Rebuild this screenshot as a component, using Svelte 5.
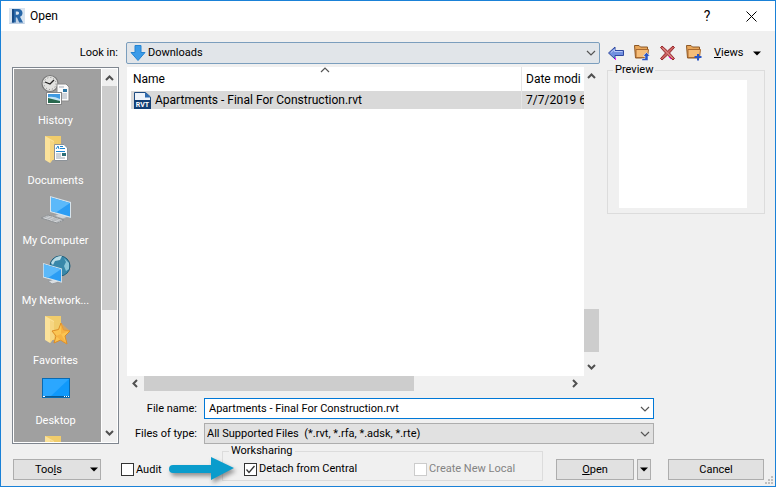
<script>
  const places = [
    { id: 'history', name: 'History' },
    { id: 'documents', name: 'Documents' },
    { id: 'computer', name: 'My Computer' },
    { id: 'network', name: 'My Network...' },
    { id: 'favorites', name: 'Favorites' },
    { id: 'desktop', name: 'Desktop' },
    { id: 'folder', name: '' },
  ];

  let fileName = 'Apartments - Final For Construction.rvt';
  let audit = false;
  let detach = true;
</script>

<!-- small arrows for scrollbars and drop-downs -->
{#snippet chevron(dir)}
  <svg class="chevron {dir}" width="9" height="9" viewBox="0 0 9 9"><path d="M1 6L4.5 2.5L8 6" /></svg>
{/snippet}

{#snippet thin()}
  <svg class="thin" width="10" height="6" viewBox="0 0 10 6"><path d="M1 1L5 5L9 1" /></svg>
{/snippet}

{#snippet triangle()}
  <svg width="8" height="5" viewBox="0 0 8 5"><path d="M0 0.5H8L4 4.5Z" fill="#000" /></svg>
{/snippet}

{#snippet folder()}
  <path d="M5 2H21V26H5Z" fill="#f0cc6c" />
  <path d="M5 2L14 7V24L10 29L5 26Z" fill="#fbe29a" />
  <path d="M10 6L14 8V24L10 29Z" fill="#f6d682" />
{/snippet}

{#snippet screen()}
  <path d="M0 0L21 6V22L0 16Z" fill="#d7e4ec" />
  <path d="M1 1.5L20 7V20.5L1 15Z" fill="#2b9df4" />
  <path d="M1 1.5L20 7L6 16.5L1 15Z" fill="#5bb9fa" />
{/snippet}

<div class="dialog">
  <header>
    <svg width="16" height="16" viewBox="0 0 16 16">
      <rect width="16" height="16" fill="#d8e4f0" />
      <path d="M0 16L7 9L16 16Z" fill="#bfd0e4" />
      <path d="M3 1H9.5C12 1 13.5 2.8 13.5 5C13.5 7 12.5 8.2 11 8.8L14 14.5H10.2L8 9.5H6.8V14.5H3Z" fill="#2867a8" />
      <path d="M6.8 3.6V6.8H8.5C10.5 6.8 10.5 3.6 8.5 3.6Z" fill="#d8e4f0" />
      <path d="M3 1H5V14.5H3Z" fill="#174b86" />
    </svg>
    <h1>Open</h1>
    <button class="plain help" aria-label="Help">?</button>
    <button class="plain close" aria-label="Close">
      <svg width="11" height="11" viewBox="0 0 11 11"><path d="M0.5 0.5L10.5 10.5M10.5 0.5L0.5 10.5" stroke="#000" fill="none" /></svg>
    </button>
  </header>

  <div class="lookin">
    <label for="look">Look in:</label>
    <div class="combo look">
      <svg width="16" height="16" viewBox="0 0 16 16"><path d="M5 0.5H11V7.5H15L8 15.5L1 7.5H5Z" fill="#3b9be8" stroke="#2484d2" /></svg>
      <select id="look"><option>Downloads</option></select>
      {@render thin()}
    </div>
    <div class="toolbar">
      <button class="plain" aria-label="Back">
        <svg width="18" height="18" viewBox="0 0 18 18">
          <path d="M1.5 9L8 3V6.5H16.5V11.5H8V15Z" fill="#7290e0" stroke="#2f489e" />
          <path d="M4 8.5L7.5 5.5V7.5H15.5" fill="none" stroke="#b6c7f6" />
          <path d="M8 14H9V16H8Z" fill="#f0f" />
        </svg>
      </button>
      <button class="plain" aria-label="Up one level">
        <svg width="18" height="18" viewBox="0 0 18 18">
          <path d="M1.5 1.5H6L7.5 3H14.5V14H2.5Z" fill="#e8a65a" stroke="#8c5826" />
          <path d="M3 5.5H15.5L14.5 13.5H3Z" fill="#f6bd78" stroke="#a9692f" />
          <path d="M10 12L13.5 8.5L17 12H15V16.5H9V14.5H12V12Z" fill="#2b56c4" stroke="#f0f0f4" stroke-width="0.5" />
        </svg>
      </button>
      <button class="plain" aria-label="Delete">
        <svg width="18" height="18" viewBox="0 0 18 18">
          <path d="M3 2L8.5 7L14 2L15.5 3.5L10.5 9L15.5 14.5L14 16L8.5 11L3 16L1.5 14.5L6.5 9L1.5 3.5Z" fill="#c9605e" stroke="#97282c" />
          <path d="M3.5 4L13.5 14" stroke="#e69a98" />
          <path d="M10 13L12 15" stroke="#f0f" />
        </svg>
      </button>
      <button class="plain" aria-label="New folder">
        <svg width="18" height="18" viewBox="0 0 18 18">
          <path d="M1.5 1.5H6L7.5 3H14.5V14H2.5Z" fill="#e8a65a" stroke="#8c5826" />
          <path d="M3 5.5H15.5L14.5 13.5H3Z" fill="#f6bd78" stroke="#a9692f" />
          <path d="M12 10H14V12H16.5V14H14V16.5H12V14H9.5V12H12Z" fill="#2b56c4" />
        </svg>
      </button>
      <button class="plain views"><span><u>V</u>iews</span>{@render triangle()}</button>
    </div>
  </div>

  <main>
    <nav>
      <ul>
        {#each places as place (place.id)}
          <li>
            <svg width="32" height="32" viewBox="0 0 32 32">
              {#if place.id === 'history'}
                <circle cx="10" cy="9.5" r="8" fill="#e2e2e0" stroke="#777" stroke-width="1.2" />
                <circle cx="10" cy="9.5" r="6" fill="none" stroke="#888" stroke-dasharray="1 2.1" />
                <path d="M5 8L10 10L14 6" fill="none" stroke="#222" stroke-width="1.3" />
                <path d="M17 10H26L29 13V27H17Z" fill="#fafafa" stroke="#8c8c8c" />
                <path d="M19 13H24M19 20H27M19 22H27M19 24H27" stroke="#a3adb8" />
                <rect x="23" y="15" width="4" height="3" fill="#2c77a5" />
                <rect x="6.5" y="18.5" width="15" height="12" fill="#fff" stroke="#888" />
                <rect x="8" y="20" width="12" height="9" fill="#3f9ae2" />
                <path d="M8 23Q14 22 20 25V27H8Z" fill="#c2e4f4" />
                <path d="M8 24L12 25L20 27V29H8Z" fill="#28684e" />
              {:else if place.id === 'documents'}
                {@render folder()}
                <path d="M14.5 10.5H24L27.5 14V26.5H14.5Z" fill="#fff" stroke="#8c9298" />
                <path d="M16 15L18 12L19 15M20 12.5H23M20 14.5H25M16 17.5H25" stroke="#1d86d0" fill="none" />
                <path d="M16 20H21M16 22H21M16 24H25" stroke="#9aa6b0" />
                <rect x="22" y="19" width="4" height="3" fill="#2b6f78" />
              {:else if place.id === 'computer'}
                <path d="M14 22L20 19L30 22L23 25Z" fill="#cfd3d6" stroke="#a4a8ac" />
                <path d="M1 24L8 21L24 26L17 29Z" fill="#dadcde" stroke="#8d9194" />
                <path d="M4 23L20 28M6 22L22 27M7 26L13 22M12 27L18 24" stroke="#b2b6ba" />
                <g transform="translate(10 2)">{@render screen()}</g>
              {:else if place.id === 'network'}
                <circle cx="20" cy="12" r="10" fill="#3887a9" stroke="#1f607e" />
                <path d="M11 9C14 3 18 2 22 2L20 6L15 7L13 11Z" fill="#b9dce6" />
                <path d="M24 4L29 9V15L26 17L24 12L26 8Z" fill="#8cc6d8" />
                <path d="M8 27L15 25L19 28L12 30Z" fill="#dadde0" stroke="#969a9e" />
                <g transform="translate(3 9) scale(0.9)">{@render screen()}</g>
              {:else if place.id === 'favorites'}
                {@render folder()}
                <path d="M21 9L23.5 16L30 17L25 22L27 30L20.5 26L14 29L16 22L12 17L18.5 15.5Z" fill="#fbc552" stroke="#dc8c25" />
                <path d="M21 9L21 20L27 30L20.5 26L16 22L21 20L30 17" fill="#f3a63a" opacity="0.6" />
              {:else if place.id === 'desktop'}
                <rect x="2.5" y="4.5" width="27" height="19" fill="#1099fb" stroke="#086ab2" />
                <path d="M3 22H11L29 5H3Z" fill="#2ba7ff" />
                <path d="M3 22.5H29" stroke="#0b5990" />
                <path d="M3 22.5H5M24 22.5H25M26 22.5H27M28 22.5H29" stroke="#fff" />
              {:else}
                {@render folder()}
              {/if}
            </svg>
            <span>{place.name}</span>
          </li>
        {/each}
      </ul>
      <div class="vbar">
        {@render chevron('up')}
        <div class="track"><div class="thumb first"></div></div>
        {@render chevron('down')}
      </div>
    </nav>

    <section>
      <div class="top">
        <div class="files">
          <div class="sheet">
            <table>
              <thead>
                <tr>
                  <th class="name">Name <svg class="thin sort" width="10" height="6" viewBox="0 0 10 6"><path d="M1 5L5 1L9 5" /></svg></th>
                  <th class="date">Date modi</th>
                </tr>
              </thead>
              <tbody>
                <tr>
                  <td class="name">
                    <div class="file">
                      <svg width="17" height="17" viewBox="0 0 17 17">
                        <path d="M0.5 0.5H11.5L16.5 5V16.5H0.5Z" fill="#eef3fa" stroke="#1c4a80" />
                        <path d="M0 8H17V17H0Z" fill="#133f74" />
                        <path d="M11 0L17 5.5H11Z" fill="#2e6bb0" />
                        <text x="8.5" y="15" text-anchor="middle">RVT</text>
                      </svg>
                      Apartments - Final For Construction.rvt
                    </div>
                  </td>
                  <td class="date">7/7/2019 6</td>
                </tr>
              </tbody>
            </table>
          </div>
          <div class="vbar">
            {@render chevron('up')}
            <div class="track end"><div class="thumb last"></div></div>
            {@render chevron('down')}
          </div>
          <div class="hbar">
            {@render chevron('left')}
            <div class="track"><div class="thumb"></div></div>
            {@render chevron('right')}
          </div>
        </div>
        <fieldset class="preview">
          <legend>Preview</legend>
          <div></div>
        </fieldset>
      </div>

      <div class="field">
        <label for="file">File name:</label>
        <div class="combo text">
          <input id="file" type="text" bind:value={fileName} />
          {@render thin()}
        </div>
      </div>
      <div class="field">
        <label for="type">Files of type:</label>
        <div class="combo">
          <select id="type"><option>All Supported Files&nbsp; (*.rvt, *.rfa, *.adsk, *.rte)</option></select>
          {@render thin()}
        </div>
      </div>
    </section>
  </main>

  <footer>
    <button class="push tools"><span>Too<u>l</u>s</span>{@render triangle()}</button>
    <label class="check audit"><input type="checkbox" bind:checked={audit} />Audit</label>
    <fieldset class="sharing">
      <legend>Worksharing</legend>
      <div class="options">
        <label class="check"><input type="checkbox" bind:checked={detach} />Detach from Central</label>
        <label class="check off"><input type="checkbox" disabled />Create New Local</label>
      </div>
      <svg class="pointer" width="70" height="30" viewBox="0 0 70 30">
        <path d="M5 11H43V3L66 14L43 26V19H5A4 4 0 0 1 5 11Z" fill="#0a9ccc" />
      </svg>
    </fieldset>
    <button class="push open"><span><u>O</u>pen</span></button>
    <button class="push more" aria-label="Open options">{@render triangle()}</button>
    <button class="push cancel">Cancel</button>
    <svg class="grip" width="9" height="9" viewBox="0 0 9 9">
      <path d="M6 0h2v2h-2zM3 3h2v2h-2zM6 3h2v2h-2zM0 6h2v2h-2zM3 6h2v2h-2zM6 6h2v2h-2z" fill="#bfbfbf" />
    </svg>
  </footer>
</div>

<style>
  :global(body) {
    margin: 0;
  }

  .dialog {
    display: flex;
    flex-direction: column;
    box-sizing: border-box;
    height: 100vh;
    border: 1px solid #1a81d7;
    background: #f0f0f0;
    color: #000;
    font: 11px/16px Roboto, "Noto Sans", sans-serif;
  }

  button, input, select {
    font: inherit;
    color: inherit;
    box-sizing: border-box;
    margin: 0;
  }

  fieldset {
    box-sizing: border-box;
    margin: 0;
    padding: 0;
    border: 1px solid #dcdcdc;
    min-width: 0;
  }

  .plain {
    display: flex;
    align-items: center;
    justify-content: center;
    border: 0;
    padding: 0;
    background: none;
  }

  /* title bar */
  header {
    display: flex;
    align-items: center;
    height: 30px;
    padding: 0 8px;
    background: #fff;
    font-size: 12px;
  }

  h1 {
    flex: 1;
    margin: 0 0 0 5px;
    font-size: 12px;
    font-weight: normal;
  }

  .help {
    width: 30px;
    font-size: 14px;
  }

  .close {
    width: 31px;
    margin-left: 14px;
  }

  /* drop-downs */
  .combo {
    display: flex;
    align-items: center;
    flex: 1;
    box-sizing: border-box;
    min-width: 0;
    height: 21px;
    padding-right: 3px;
    border: 1px solid #adadad;
    background: #e1e1e1;
  }

  .combo select,
  .combo input {
    flex: 1;
    min-width: 0;
    height: 100%;
    padding: 0 2px;
    border: 0;
    outline: 0;
    appearance: none;
    background: none;
  }

  .combo.text {
    border-color: #0078d7;
    background: #fff;
  }

  .combo.text input {
    padding: 0 4px;
  }

  .combo.look {
    height: 22px;
    padding-left: 3px;
    border-color: #7b9ebd;
    border-radius: 2px;
    background: #e1e5e9;
  }

  .thin path {
    fill: none;
    stroke: #555;
    stroke-width: 1.2;
  }

  .lookin {
    display: flex;
    align-items: center;
    gap: 7px;
    margin-top: 11px;
    padding: 0 11px;
  }

  .lookin label {
    box-sizing: border-box;
    width: 107px;
    padding-right: 1px;
    text-align: right;
  }

  .toolbar {
    display: flex;
    align-items: center;
    gap: 8px;
    width: 157px;
  }

  .views {
    flex: 1;
    justify-content: space-between;
    padding: 0 3px;
  }

  main {
    display: flex;
    flex: 1;
    gap: 8px;
    min-height: 0;
    padding: 3px 10px 0 11px;
  }

  /* places on the left */
  nav {
    display: flex;
    box-sizing: border-box;
    width: 107px;
    border: 1px solid #7f868f;
    outline: 1px solid #fff;
    outline-offset: -2px;
    padding: 1px;
  }

  nav ul {
    flex: 1;
    min-width: 0;
    margin: 0;
    padding: 0 4px 0 0;
    overflow: hidden;
    border-right: 1px solid #fff;
    background: #a0a0a0;
    color: #fff;
    list-style: none;
  }

  li {
    display: flex;
    flex-direction: column;
    align-items: center;
    gap: 7px;
    height: 55px;
    padding-top: 5px;
  }

  /* scrollbars */
  .vbar {
    display: flex;
    flex-direction: column;
    align-items: center;
    gap: 3px;
    width: 15px;
    padding: 5px 0;
    box-sizing: border-box;
  }

  .track {
    display: flex;
    flex: 1;
    align-self: stretch;
  }

  .end {
    align-items: flex-end;
  }

  .thumb {
    background: #cdcdcd;
  }

  .vbar .thumb {
    width: 100%;
  }

  .first {
    height: 66%;
  }

  .last {
    height: 43px;
    margin-bottom: 7px;
  }

  .hbar {
    display: flex;
    grid-column: 1 / 3;
    align-items: center;
    gap: 4px;
    padding: 0 20px 0 4px;
  }

  .hbar .thumb {
    width: 64%;
  }

  .chevron {
    flex: none;
  }

  .chevron path {
    fill: none;
    stroke: #505050;
    stroke-width: 2;
  }

  .down {
    transform: rotate(180deg);
  }

  .left {
    transform: rotate(-90deg);
  }

  .right {
    transform: rotate(90deg);
  }

  section {
    display: flex;
    flex: 1;
    flex-direction: column;
    min-width: 0;
  }

  .top {
    display: flex;
    flex: 1;
    gap: 8px;
    min-height: 0;
    margin-bottom: 7px;
  }

  .files {
    display: grid;
    flex: 1;
    grid-template: 1fr 15px / 1fr 15px;
    min-width: 0;
  }

  .sheet {
    overflow: hidden;
    padding-left: 4px;
    background: #fff;
  }

  table {
    width: 100%;
    border-collapse: collapse;
    table-layout: fixed;
    font-size: 12px;
    white-space: nowrap;
  }

  th {
    position: relative;
    height: 24px;
    padding: 0 0 0 2px;
    font-weight: normal;
    text-align: left;
  }

  td {
    height: 18px;
    padding: 0;
    background: #d9d9d9;
  }

  .date {
    width: 58px;
    padding-left: 4px;
    border-left: 1px solid #e5e5e5;
  }

  .sort {
    position: absolute;
    top: 0;
    left: 50%;
    margin-left: -6px;
  }

  .file {
    display: flex;
    align-items: center;
    gap: 4px;
    padding-left: 3px;
  }

  .file text {
    fill: #fff;
    font: bold 7px Roboto, sans-serif;
  }

  .preview {
    width: 158px;
    height: 150px;
    margin-top: -3px;
    padding: 4px 17px 0 11px;
  }

  legend {
    margin-left: 6px;
    padding: 0 2px;
    line-height: 12px;
  }

  .preview legend {
    margin-left: -6px;
  }

  .preview div {
    height: 128px;
    background: #fff;
  }

  .field {
    display: flex;
    align-items: center;
    gap: 7px;
    margin-bottom: 4px;
    padding-right: 111px;
  }

  .field:last-child {
    margin-bottom: 0;
  }

  .field label {
    width: 70px;
    text-align: right;
  }

  /* bottom row */
  footer {
    position: relative;
    display: flex;
    align-items: flex-end;
    padding: 1px 11px 5px 12px;
  }

  .push {
    display: flex;
    align-items: center;
    justify-content: center;
    height: 21px;
    margin-bottom: 1px;
    padding: 0;
    border: 1px solid #adadad;
    background: #e1e1e1;
  }

  .tools {
    justify-content: space-between;
    width: 88px;
    padding: 0 2px 0 21px;
  }

  .check {
    display: flex;
    align-items: center;
    gap: 2px;
    white-space: nowrap;
  }

  .check input {
    width: 13px;
    height: 13px;
    appearance: none;
    border: 1px solid #333;
    background: #fff;
  }

  .check input:checked {
    background: #fff url("data:image/svg+xml,%3Csvg xmlns='http://www.w3.org/2000/svg' viewBox='0 0 11 11'%3E%3Cpath d='M1.5 5.5L4 8.5L9.5 2' fill='none' stroke='%23333' stroke-width='1.3'/%3E%3C/svg%3E");
  }

  .off {
    color: #838383;
  }

  .off input {
    border-color: #ccc;
  }

  .audit {
    width: 101px;
    height: 21px;
    margin-left: 20px;
    padding-bottom: 1px;
  }

  .sharing {
    position: relative;
    width: 321px;
    height: 36px;
  }

  .options {
    display: flex;
    gap: 57px;
    padding: 4px 0 0 21px;
  }

  .pointer {
    position: absolute;
    top: -3px;
    left: -55px;
    filter: drop-shadow(2px 3px 2px #0006);
  }

  .open {
    width: 78px;
    margin-left: auto;
  }

  .more {
    width: 14px;
    margin-left: 3px;
  }

  .cancel {
    width: 96px;
    margin-left: 17px;
  }

  .grip {
    position: absolute;
    right: 1px;
    bottom: 1px;
  }
</style>
